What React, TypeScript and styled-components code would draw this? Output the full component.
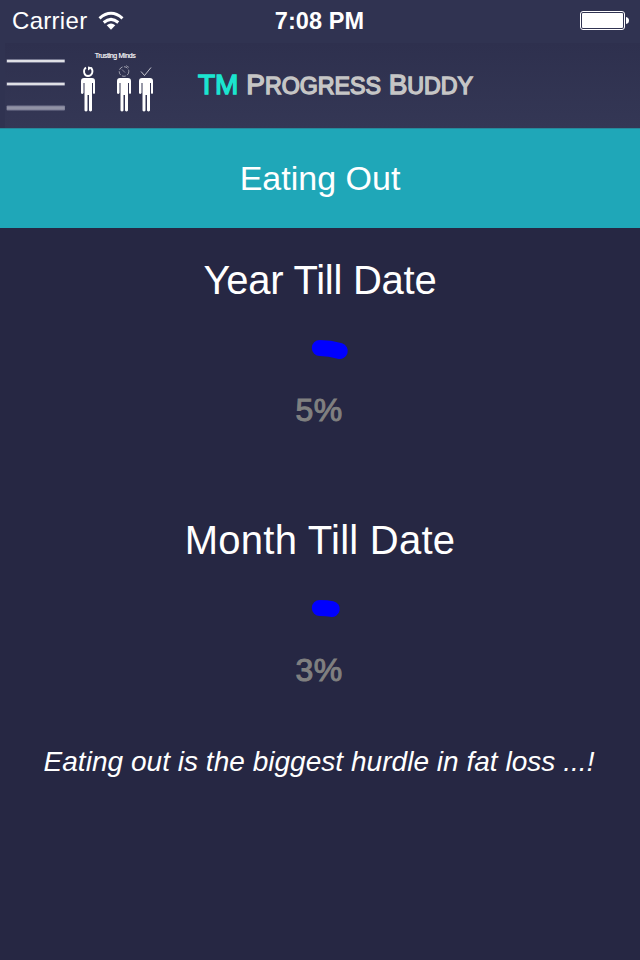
import React from "react";
import styled, { createGlobalStyle } from "styled-components";

const GlobalStyle = createGlobalStyle`
  * { box-sizing: border-box; }
  body { margin: 0; background: #262743; }
`;

const Screen = styled.main`
  width: 640px;
  height: 960px;
  display: flex;
  flex-direction: column;
  overflow: hidden;
  background: #262743;
  color: #fff;
  font-family: "Liberation Sans", Arial, sans-serif;
  white-space: nowrap;
`;

const StatusBar = styled.header`
  height: 43px;
  flex: none;
  display: grid;
  grid-template-columns: 1fr auto 1fr;
  align-items: center;
  padding: 0 11px 2px 12px;
  background: #303351;
  font-size: 24px;
  line-height: 40px;
`;

const Carrier = styled.div`
  display: flex;
  align-items: center;
  gap: 11px;
  letter-spacing: 0.3px;
`;

const Clock = styled.time`
  margin-right: 2px;
  font-weight: 700;
  font-size: 23.5px;
  letter-spacing: 0.1px;
`;

const BatteryIcon = styled.svg`
  justify-self: end;
`;

const NavBar = styled.nav`
  height: 85px;
  flex: none;
  display: flex;
  align-items: flex-start;
  background: linear-gradient(#2e304e, #343755);
`;

const MenuButton = styled.button`
  width: 72px;
  height: 85px;
  padding: 0;
  border: 0;
  background: none;
  svg { display: block; }
`;

const Logo = styled.div`
  width: 90px;
  padding-top: 8px;
  display: flex;
  flex-direction: column;
  align-items: center;
`;

const LogoName = styled.span`
  font-size: 7px;
  line-height: 9px;
  margin-right: 4px;
  letter-spacing: -0.35px;
  -webkit-text-stroke: 0.15px currentColor;
`;

const AppTitle = styled.h1`
  margin: 25px 0 0 36px;
  font-size: 28px;
  line-height: 34px;
  font-weight: 400;
  color: #c6c6c6;
  -webkit-text-stroke: 1.4px currentColor;
`;

const Accent = styled.span`
  color: #1be5d0;
`;

const SmallCaps = styled.span`
  font-size: 23.2px;
`;

const Banner = styled.h2`
  height: 100px;
  flex: none;
  margin: 0;
  border-top: 1px solid #26899b;
  background: #1fa7b8;
  text-align: center;
  font-size: 34px;
  line-height: 99px;
  font-weight: 400;
  letter-spacing: 0;
`;

const Stat = styled.section`
  height: 260px;
  flex: none;
  display: flex;
  flex-direction: column;
  align-items: center;
`;

const StatTitle = styled.h3<{ $tracking: number }>`
  margin: 29px 0 0;
  font-size: 40px;
  line-height: 46px;
  font-weight: 400;
  letter-spacing: ${(p) => p.$tracking}px;
`;

const Progress = styled.svg`
  display: block;
  margin-top: 31px;
`;

const Percent = styled.div`
  margin: 26px 2px 0 0;
  font-size: 32px;
  line-height: 40px;
  letter-spacing: 0.5px;
  color: #808080;
  -webkit-text-stroke: 1px currentColor;
`;

const Remark = styled.p`
  margin: 0 2px 0 0;
  height: 66px;
  text-align: center;
  font-size: 28px;
  line-height: 28px;
  font-style: italic;
  letter-spacing: 0.03px;
`;

const BODY =
  "M3 0H11Q14 0 14 3V15Q13 17 12 15V5H11V32.5Q9.500 34.500 8 32.500V17H6.500V32.500Q5 34.500 3.500 32.500V5H2.500V15Q1 17 0 15V3Q0 0 3 0Z";

const stats = [
  { title: "Year Till Date", value: 5, tracking: -0.25, arc: "M320 348Q330 348 340 351" },
  { title: "Month Till Date", value: 3, tracking: 0.25, arc: "M320 348Q327 348 332 349" },
];

export default function App() {
  return (
    <Screen>
      <GlobalStyle />
      <StatusBar>
        <Carrier>
          Carrier
          <svg width="26" height="20" viewBox="0 0 26 20" fill="none" stroke="#fff" strokeWidth="3">
            <path d="M1.500 7.300Q13 -2.700 24.500 7.300" />
            <path d="M5.700 11.500Q13 5.200 20.300 11.500" />
            <path d="M8.700 14.300Q13 10.900 17.300 14.300L13 18.800Z" fill="#fff" stroke="none" />
          </svg>
        </Carrier>
        <Clock>7:08 PM</Clock>
        <BatteryIcon width="49" height="19" viewBox="0 0 49 19">
          <rect x="0.500" y="0.500" width="44" height="18" rx="2.500" fill="none" stroke="#fff" />
          <rect x="2" y="2" width="41" height="15" rx="1" fill="#fff" />
          <path d="M46 6Q49 6.500 49 9.500T46 13Z" fill="#fff" />
        </BatteryIcon>
      </StatusBar>

      <NavBar>
        <MenuButton aria-label="Menu">
          <svg width="72" height="85" viewBox="0 0 72 85">
            <rect width="5" height="85" fill="#303351" />
            <g fill="#777991">
              <rect x="6.500" y="16" width="58.500" height="4" rx="1" />
              <rect x="6.500" y="39" width="58.500" height="4" rx="1" />
              <rect x="6.500" y="62.500" width="58.500" height="5" rx="1" />
            </g>
            <path d="M7 18H64.500M7 41H64.500" stroke="#dfe0e5" strokeWidth="2" />
            <path d="M7 65H64.500" stroke="#9192a5" strokeWidth="3" />
          </svg>
        </MenuButton>
        <Logo>
          <LogoName>Trusting Minds</LogoName>
          <svg width="76" height="53" viewBox="79 60 76 53" fill="none" stroke="#fff">
            <path d="M86 67.500C82.500 70 84 76 88 76S94 71 91 68" strokeWidth="1.800" />
            <path d="M88 66.500V70.500L92.500 67.500Z" fill="#fff" stroke="none" />
            <circle cx="124" cy="71.500" r="4.800" strokeWidth="0.800" strokeDasharray="4 1.500" opacity="0.65" />
            <path d="M122 69.500L125 72.500M126 65.500L129 67.500" strokeWidth="0.700" opacity="0.6" />
            <path d="M141 71.500L144.500 75.500L151 67.500" strokeWidth="0.900" opacity="0.8" />
            <g fill="#fff" stroke="none">
              <path d={BODY} transform="translate(81 78)" />
              <path d={BODY} transform="translate(117 78)" />
              <path d={BODY} transform="translate(139 78)" />
            </g>
          </svg>
        </Logo>
        <AppTitle>
          <Accent>TM</Accent> P<SmallCaps>ROGRESS</SmallCaps> B<SmallCaps>UDDY</SmallCaps>
        </AppTitle>
      </NavBar>

      <Banner>Eating Out</Banner>

      {stats.map((stat) => (
        <Stat key={stat.title}>
          <StatTitle $tracking={stat.tracking}>{stat.title}</StatTitle>
          <Progress width="40" height="30" viewBox="300 334 40 30" overflow="visible">
            <path
              d={stat.arc}
              transform="translate(-0.200 0)"
              fill="none"
              stroke="#00f"
              strokeWidth="16"
              strokeLinecap="round"
            />
          </Progress>
          <Percent>{stat.value}%</Percent>
        </Stat>
      ))}

      <Remark>Eating out is the biggest hurdle in fat loss ...!</Remark>
    </Screen>
  );
}
